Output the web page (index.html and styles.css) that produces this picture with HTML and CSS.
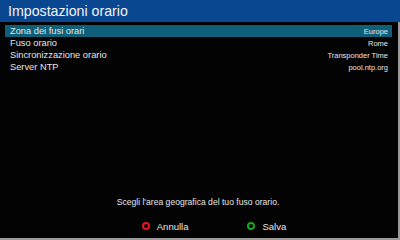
FILE: index.html
```html
<!DOCTYPE html>
<html lang="it">
<head>
<meta charset="utf-8">
<title>Impostazioni orario</title>
<link rel="stylesheet" href="styles.css">
</head>
<body>
<div class="screen">
  <header class="header">Impostazioni orario</header>
  <div class="body">
    <ul class="menu">
      <li class="row selected"><span class="label">Zona dei fusi orari</span><span class="value">Europe</span></li>
      <li class="row"><span class="label">Fuso orario</span><span class="value">Rome</span></li>
      <li class="row"><span class="label">Sincronizzazione orario</span><span class="value">Transponder Time</span></li>
      <li class="row"><span class="label">Server NTP</span><span class="value">pool.ntp.org</span></li>
    </ul>
    <p class="hint">Scegli l'area geografica del tuo fuso orario.</p>
    <div class="buttons">
      <div class="btn"><span class="ring red"></span><span>Annulla</span></div>
      <div class="btn"><span class="ring green"></span><span>Salva</span></div>
    </div>
  </div>
</div>
</body>
</html>
```

FILE: styles.css
```css
html, body {
  margin: 0;
  padding: 0;
  width: 400px;
  height: 240px;
  overflow: hidden;
  background: #000;
}
body {
  font-family: "Liberation Sans", Arial, sans-serif;
  color: #e6e6e6;
}
.screen {
  width: 400px;
  height: 240px;
  display: flex;
  flex-direction: column;
}
.header {
  height: 22px;
  flex: none;
  background: #0a4791;
  color: #f2f2f2;
  font-size: 14.2px;
  line-height: 22px;
  padding-left: 8px;
  box-sizing: border-box;
}
.body {
  flex: 1;
  display: flex;
  flex-direction: column;
  border-right: 2px solid #9a9a9a;
  border-bottom: 2px solid #9a9a9a;
  background: #030303;
}
.menu {
  list-style: none;
  margin: 3px 6px 0 5px;
  padding: 0;
}
.row {
  height: 12px;
  display: flex;
  align-items: center;
  justify-content: space-between;
  padding: 0 4px 0 5px;
}
.row.selected {
  background: #0f5f78;
}
.label {
  font-size: 9.3px;
}
.value {
  font-size: 7.5px;
}
.hint {
  margin: auto 0 0 0;
  text-align: center;
  font-size: 8.6px;
  line-height: 12px;
  padding-right: 2px;
}
.buttons {
  display: flex;
  justify-content: center;
  gap: 59px;
  height: 24px;
  align-items: center;
  padding-left: 30px;
  margin-top: 6px;
}
.btn {
  display: flex;
  align-items: center;
  gap: 7px;
  font-size: 9.5px;
}
.ring {
  width: 4px;
  height: 4px;
  border-radius: 50%;
  border: 2px solid;
  display: inline-block;
}
.ring.red { border-color: #e8141a; }
.ring.green { border-color: #1aa51a; }
```
